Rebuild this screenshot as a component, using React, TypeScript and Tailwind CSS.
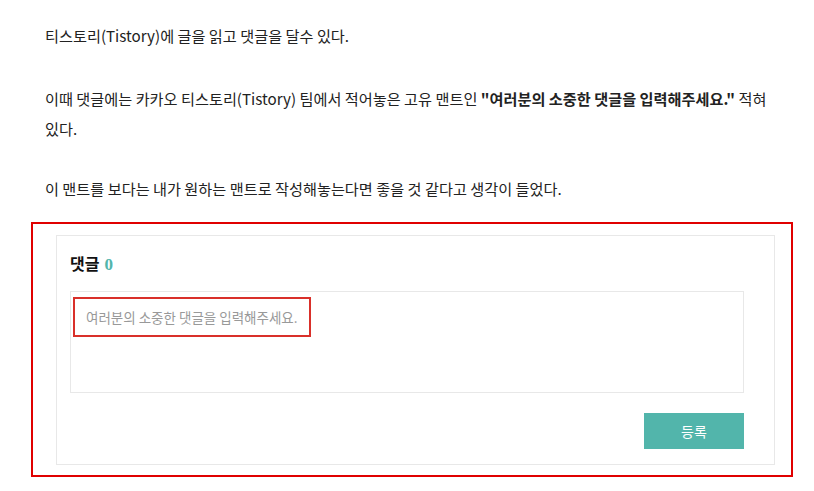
export default function App() {
  return (
    <div
      className="min-h-[491px] w-[814px] bg-white text-[#222]"
      style={{ fontFamily: '"Noto Sans CJK KR", "Noto Sans", sans-serif' }}
    >
      <div className="w-[792px] break-keep pl-[45px] pt-[20px] text-[15.2px] leading-[30px]">
        <p>티스토리(Tistory)에 글을 읽고 댓글을 달수 있다.</p>
        <p className="mt-[33px]">
          이때 댓글에는 카카오 티스토리(Tistory) 팀에서 적어놓은 고유 맨트인{" "}
          <b className="font-bold">"여러분의 소중한 댓글을 입력해주세요."</b> 적혀 있다.
        </p>
        <p className="mt-[30px]">
          이 맨트를 보다는 내가 원하는 맨트로 작성해놓는다면 좋을 것 같다고 생각이 들었다.
        </p>
      </div>

      {/* red annotation frame */}
      <div className="ml-[31px] mt-[19px] h-[255px] w-[762px] border-2 border-[#e00000] pl-[23px] pt-[11px]">
        <div className="h-[230px] w-[719px] border border-[#e8e8e8] pl-[13px] pt-[19px]">
          <h3
            className="flex h-[20px] items-center gap-[5px] text-[16px] font-bold text-[#111]"
            style={{ fontFamily: '"Liberation Serif", "Noto Sans CJK KR", serif' }}
          >
            <span>댓글</span>
            <span className="text-[17px] text-[#52b5ab]">0</span>
          </h3>
          <div className="mt-[16px] h-[102px] w-[674px] border border-[#e8e8e8] pl-[2px] pt-[5px]">
            <div className="inline-block h-[40px] border-2 border-[#d9302a] px-[11px] text-[13.5px] leading-[36px] text-[#999]">
              여러분의 소중한 댓글을 입력해주세요.
            </div>
          </div>
          <div className="mt-[20px] flex w-[674px] justify-end">
            <button className="h-[36px] w-[100px] bg-[#52b5ab] text-[14px] text-white">
              등록
            </button>
          </div>
        </div>
      </div>
    </div>
  );
}
